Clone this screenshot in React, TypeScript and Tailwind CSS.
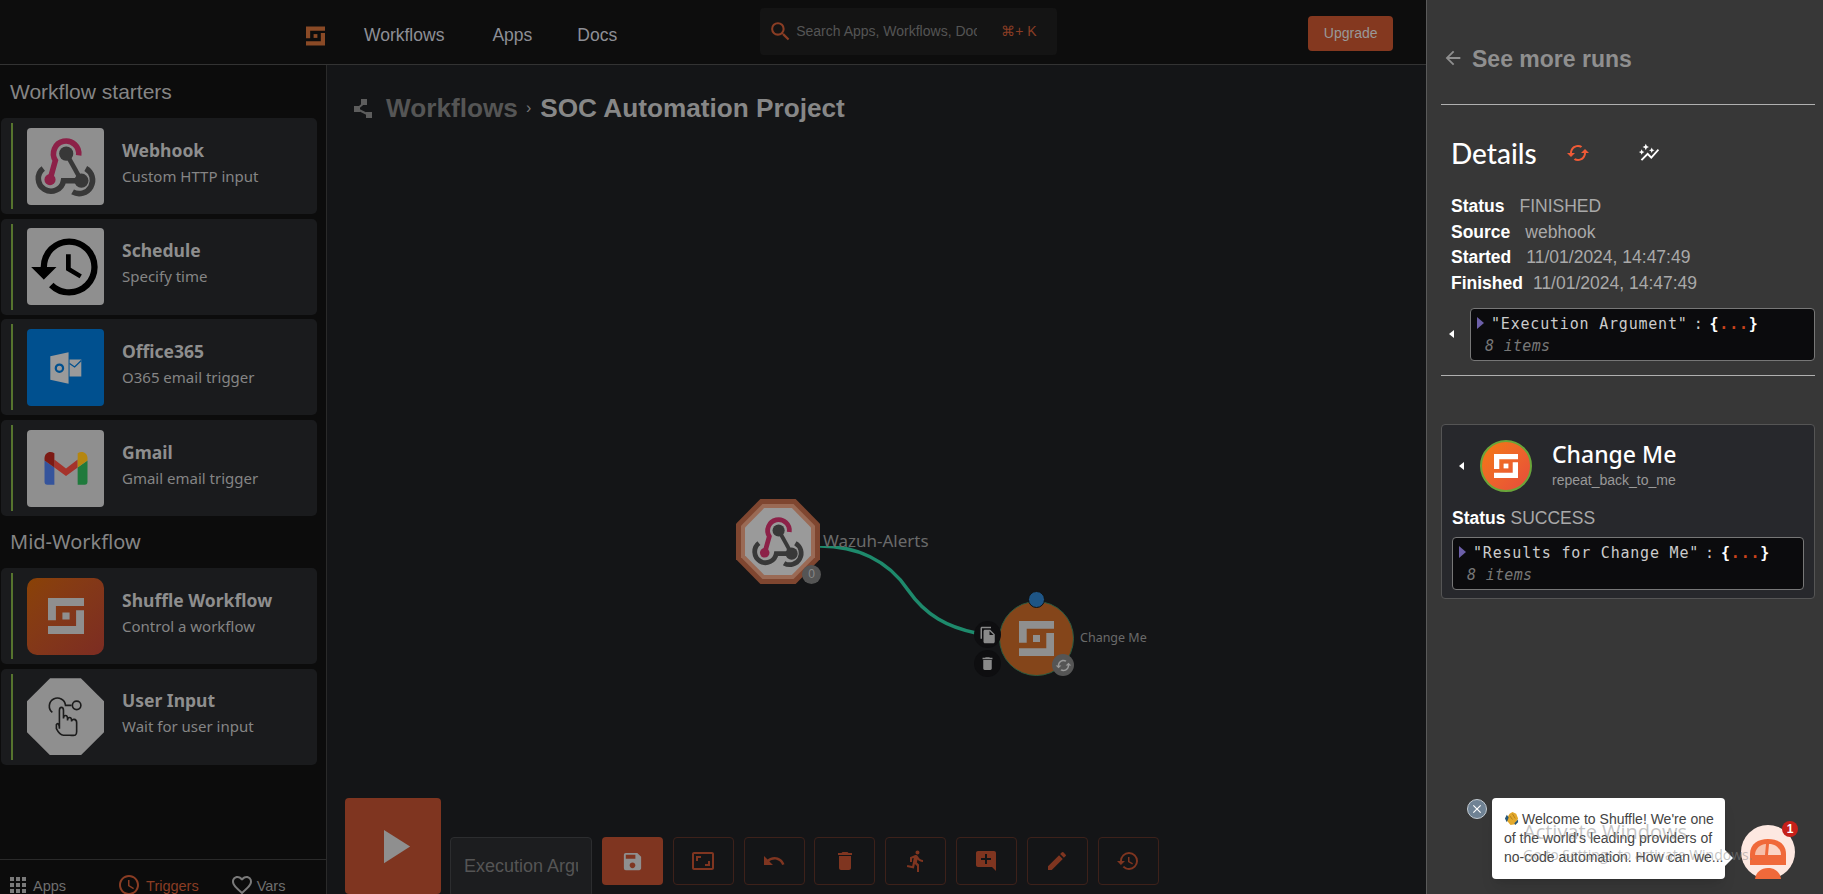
import type { ReactNode } from 'react';
import {
  MdAddComment,
  MdApps,
  MdArrowBack,
  MdAspectRatio,
  MdAutoGraph,
  MdCached,
  MdDelete,
  MdDirectionsRun,
  MdEdit,
  MdFavoriteBorder,
  MdFileCopy,
  MdHistory,
  MdOutlineClose,
  MdOutlineSchedule,
  MdPlayArrow,
  MdRestore,
  MdSave,
  MdSearch,
  MdUndo,
} from 'react-icons/md';

function ShuffleLogo({ className, fill }: { className: string; fill: string }) {
  return (
    <svg viewBox="0 0 100 100" className={className} fill={fill}>
      <path d="M0 0H100V22H22V62H0Z" />
      <path d="M78 34H100V100H0V78H78Z" />
      <path d="M40 40H60V60H40Z" />
    </svg>
  );
}

function WebhookIcon({ className }: { className: string }) {
  return (
    <svg viewBox="0 0 76 76" className={className} fill="none" strokeLinecap="butt">
      <path d="M51 27A12.5 12.5 0 1 0 28 32L22.7 51" stroke="#8c2148" strokeWidth="5.5" />
      <circle cx="22.7" cy="51" r="5.5" fill="#8c2148" />
      <path d="M38.7 25 53.7 52" stroke="#383838" strokeWidth="4.5" />
      <path d="M16 40A12.5 12.5 0 1 0 36 52H53.7" stroke="#383838" strokeWidth="5.5" />
      <path d="M58 40A12.5 12.5 0 1 1 45 63" stroke="#383838" strokeWidth="5.5" />
      <circle cx="38.7" cy="25.3" r="7" fill="#383838" />
      <circle cx="53.7" cy="52" r="7" fill="#383838" />
    </svg>
  );
}

function OutlookIcon() {
  return (
    <svg viewBox="0 0 76 76" className="w-full h-full">
      <path d="M23 27 41 23V54L23 50Z" fill="#9a9a9a" />
      <circle cx="32" cy="38.7" r="3.6" fill="none" stroke="#00508f" strokeWidth="2.2" />
      <path d="M42 30H53.6V47H42Z" fill="#9a9a9a" />
      <path d="M42 34 47 37.5 53.6 31" fill="none" stroke="#00508f" strokeWidth="1.3" />
    </svg>
  );
}

function GmailIcon() {
  return (
    <svg viewBox="0 0 76 76" className="w-full h-full">
      <path d="M17.3 30 27 37V54H20Q17.3 54 17.3 51Z" fill="#35549c" />
      <path d="M59.7 30 50 37V54H57Q59.7 54 59.7 51Z" fill="#1f7a3c" />
      <path d="M27 29 38.5 38 50 29V37L38.5 45.5 27 37Z" fill="#a5332b" />
      <path d="M17.3 30V28C17.3 22 23 20 27 23V37Z" fill="#7c1a14" />
      <path d="M59.7 30V28C59.7 22 54 20 50 23V37Z" fill="#b5860f" />
    </svg>
  );
}

function UserInputIcon() {
  return (
    <svg viewBox="0 0 76 76" className="w-full h-full" fill="none" stroke="#1c1c1c" strokeWidth="1.6">
      <path d="M25 34A8 8 0 1 1 38 27H44" />
      <circle cx="49" cy="27" r="4.2" />
      <path d="M32 50V32C32 28 36 28 36 32V40C36 36 40 36 40 40V42C40 38 44 38 44 42V43C44 40 49 40 49 44V53C49 58 46 56.5 42 56.5H36C33 56.5 30 52 29 50L29 46C30 44 32 45 32 50Z" fill="#8f8f8f" />
    </svg>
  );
}

function WorkflowsIcon() {
  return (
    <svg viewBox="0 0 22 20" className="w-[22px] h-[20px]" fill="#5d5d5d" stroke="#5d5d5d">
      <path d="M11 5 4 11 16 17" fill="none" strokeWidth="2" />
      <rect x="8" y="1" width="6" height="6" stroke="none" />
      <rect x="1" y="8" width="6" height="6" stroke="none" />
      <rect x="13" y="14" width="6" height="6" stroke="none" />
    </svg>
  );
}

function HandEmoji() {
  return (
    <svg viewBox="0 0 16 16" className="inline-block w-[15px] h-[15px] mr-[3px] align-[-2px]">
      <path d="M2 9 6 3 9 1 13 3 15 8 12 14 7 15Z" fill="#e3a92c" />
      <path d="M6 5 9 9M9 3 12 8" stroke="#9a6b12" strokeWidth="0.7" />
      <path d="M3 4 1 8 3 12 5 7ZM12 15 15 12 15 9 11 13Z" fill="#27587a" />
    </svg>
  );
}

function BotAvatar() {
  return (
    <svg viewBox="0 0 54 54" className="w-full h-full">
      <circle cx="27" cy="27" r="27" fill="#fde8e1" />
      <path d="M9 40V29C9 19 17 14 27 14S45 19 45 29V40Z" fill="#f0693a" />
      <path d="M14 30C14 24 19 19 25 19L24 30Z" fill="#f7bfa9" />
      <path d="M28 19C35 19 40 24 40 30H27Z" fill="#fbd5c6" />
      <path d="M14 54C15 47 20 43 27 43S39 47 40 54Z" fill="#f0693a" />
    </svg>
  );
}

function JsonBox({ label, className }: { label: string; className: string }) {
  return (
    <div className={`h-[53px] bg-[#0b0b0d] border border-[#777] rounded-[4px] pl-[6px] font-['DejaVu_Sans_Mono',monospace] text-[15px] tracking-[0.8px] ${className}`}>
      <div className="flex items-center h-[27px] mt-[2px] text-[#ccc]">
        <span className="w-0 h-0 border-y-[6px] border-y-transparent border-l-[7px] border-l-[#6c5fa8] mr-[7px] mb-[3px]" />
        <span>{label}</span>
        <span className="mx-[6px]">:</span>
        <span className="text-white font-bold">{'{'}</span>
        <span className="text-[#c9431c] font-bold">...</span>
        <span className="text-white font-bold">{'}'}</span>
      </div>
      <div className="pl-[8px] -mt-[1px] text-[#777] italic text-[15px] leading-[18px] tracking-[0.3px]">8 items</div>
    </div>
  );
}

function Caret() {
  return <span className="block shrink-0 w-0 h-0 border-y-[4px] border-y-transparent border-r-[5px] border-r-white" />;
}

type StarterProps = { name: string; desc: string; icon: ReactNode; box: string };

function StarterCard({ name, desc, icon, box }: StarterProps) {
  return (
    <div className="h-[96px] rounded-[5px] bg-[#1a1b1d] flex items-center pl-[10px]">
      <div className="w-[2px] h-[86px] bg-[#56742e]" />
      <div className={`w-[77px] h-[77px] ml-[14px] overflow-hidden ${box}`}>{icon}</div>
      <div className="ml-[18px] mb-[8px] font-['Noto_Sans',sans-serif]">
        <div className="text-[17.5px] leading-[22px] font-bold text-[#8e8e8e]">{name}</div>
        <div className="text-[15px] leading-[20px] mt-[5px] text-[#858585]">{desc}</div>
      </div>
    </div>
  );
}

const tools = [
  { icon: <MdAspectRatio />, key: 'fit' },
  { icon: <MdUndo />, key: 'undo' },
  { icon: <MdDelete />, key: 'delete' },
  { icon: <MdDirectionsRun />, key: 'run' },
  { icon: <MdAddComment />, key: 'comment' },
  { icon: <MdEdit />, key: 'edit' },
  { icon: <MdRestore />, key: 'history' },
];

const runRows = [
  { label: 'Status', value: 'FINISHED', gap: 'ml-[15px]' },
  { label: 'Source', value: 'webhook', gap: 'ml-[15px]' },
  { label: 'Started', value: '11/01/2024, 14:47:49', gap: 'ml-[15px]' },
  { label: 'Finished', value: '11/01/2024, 14:47:49', gap: 'ml-[10px]' },
];

export default function App() {
  return (
    <div className="w-[1823px] h-[894px] overflow-hidden flex relative bg-[#141517] font-['Liberation_Sans',sans-serif]">
      <div className="flex-1 min-w-0 flex flex-col">
        {/* top bar */}
        <header className="h-[65px] shrink-0 bg-[#0d0d0d] border-b border-[#333] flex items-center pl-[306px]">
          <ShuffleLogo className="w-[19px] h-[20px] mt-[7px]" fill="#8a4a26" />
          <nav className="flex items-center ml-[39px] mt-[7px] text-[17.5px] text-[#8d8f96]">
            <span>Workflows</span>
            <span className="ml-[48px]">Apps</span>
            <span className="ml-[45px]">Docs</span>
          </nav>
          <div className="w-[297px] h-[47px] ml-[143px] rounded-[4px] bg-[#141414] flex items-center pl-[8px] self-start mt-[8px]">
            <MdSearch className="text-[25px] text-[#8a3d24]" />
            <span className="ml-[3px] w-[181px] overflow-hidden whitespace-nowrap text-[14px] text-[#555]">Search Apps, Workflows, Docs</span>
            <span className="ml-[24px] text-[14px] text-[#8a3d24]">⌘+ K</span>
          </div>
          <button className="w-[85px] h-[35px] ml-[251px] mt-[2px] rounded-[4px] bg-[#84381f] text-[14px] text-[#999]">Upgrade</button>
        </header>

        <div className="flex-1 min-h-0 flex">
          {/* left sidebar */}
          <aside className="w-[327px] shrink-0 bg-[#0c0c0c] border-r border-[#2a2a2a] flex flex-col">
            <div className="w-[316px] ml-[1px]">
              <h2 className="pl-[9px] h-[53px] pt-[13px] text-[21px] leading-[28px] text-[#858585]">Workflow starters</h2>
              <div className="flex flex-col gap-[4.7px]">
                <StarterCard name="Webhook" desc="Custom HTTP input" box="bg-[#8f8f8f] rounded-[4px]" icon={<WebhookIcon className="w-full h-full" />} />
                <StarterCard
                  name="Schedule"
                  desc="Specify time"
                  box="bg-[#8f8f8f] rounded-[4px] flex items-center justify-center"
                  icon={<MdHistory className="text-[76px] text-black shrink-0" />}
                />
                <StarterCard name="Office365" desc="O365 email trigger" box="bg-[#00508f] rounded-[4px]" icon={<OutlookIcon />} />
                <StarterCard name="Gmail" desc="Gmail email trigger" box="bg-[#8f8f8f] rounded-[4px]" icon={<GmailIcon />} />
              </div>
              <h2 className="pl-[9px] h-[52px] pt-[12px] font-['Noto_Sans',sans-serif] text-[20px] leading-[28px] text-[#858585]">Mid-Workflow</h2>
              <div className="flex flex-col gap-[4.7px]">
                <StarterCard
                  name="Shuffle Workflow"
                  desc="Control a workflow"
                  box="rounded-[10px] bg-gradient-to-br from-[#8a4205] to-[#7c2c22] flex items-center justify-center"
                  icon={<ShuffleLogo className="w-[36px] h-[36px]" fill="#8f8f8f" />}
                />
                <StarterCard
                  name="User Input"
                  desc="Wait for user input"
                  box="bg-[#8f8f8f] [clip-path:polygon(30%_0,70%_0,100%_30%,100%_70%,70%_100%,30%_100%,0_70%,0_30%)]"
                  icon={<UserInputIcon />}
                />
              </div>
            </div>
            <div className="mt-auto h-[35px] shrink-0 border-t border-[#2a2a2a] flex items-start pl-[9px] pt-[14px] text-[14.5px] leading-[24px] text-[#6f6f6f]">
              <MdApps className="text-[24px] -ml-[3px] -mt-[1px] text-[#7a7a7a]" />
              <span className="ml-[3px]">Apps</span>
              <MdOutlineSchedule className="text-[24px] ml-[51px] -mt-[1px] text-[#8a3d24]" />
              <span className="ml-[5px] text-[#8a3d24]">Triggers</span>
              <MdFavoriteBorder className="text-[24px] ml-[31px] -mt-[1px] text-[#7a7a7a]" />
              <span className="ml-[3px]">Vars</span>
            </div>
          </aside>

          {/* workflow canvas */}
          <main className="flex-1 min-w-0 relative">
            <div className="flex items-center pl-[26px] pt-[26px]">
              <WorkflowsIcon />
              <span className="ml-[11px] text-[26.2px] leading-[34px] font-bold text-[#555]">Workflows</span>
              <span className="ml-[8px] text-[16px] text-[#777]">›</span>
              <span className="ml-[9px] text-[26.2px] leading-[34px] font-bold text-[#878787]">SOC Automation Project</span>
            </div>

            <svg className="absolute left-[493px] top-[481px] w-[160px] h-[92px]" viewBox="0 0 160 92" fill="none">
              <path d="M0 0C36 0 68 14 88 44C106 70 128 81 156 87" stroke="#1e8a6c" strokeWidth="3.5" />
            </svg>

            {/* trigger node */}
            <div className="absolute left-[409px] top-[434px] w-[84px] h-[85px] bg-[#7f4630] [clip-path:polygon(29%_0,71%_0,100%_29%,100%_71%,71%_100%,29%_100%,0_71%,0_29%)] flex items-center justify-center">
              <div className="w-[74px] h-[75px] bg-[#9a6a55] [clip-path:polygon(29%_0,71%_0,100%_29%,100%_71%,71%_100%,29%_100%,0_71%,0_29%)] flex items-center justify-center">
                <div className="w-[66px] h-[67px] bg-[#9a9a9a] [clip-path:polygon(29%_0,71%_0,100%_29%,100%_71%,71%_100%,29%_100%,0_71%,0_29%)]">
                  <WebhookIcon className="w-full h-full" />
                </div>
              </div>
            </div>
            <div className="absolute left-[475px] top-[500px] w-[19px] h-[19px] rounded-full bg-[#555] text-[#888] text-[12px] leading-[19px] text-center">0</div>
            <div className="absolute left-[496px] top-[463px] font-['Noto_Sans',sans-serif] text-[17px] leading-[26px] text-[#6a6a6a] whitespace-nowrap">Wazuh-Alerts</div>

            {/* action node */}
            <div className="absolute left-[672px] top-[536px] w-[75px] h-[75px] rounded-full border border-[#2b5a40] bg-[#84451a] flex items-center justify-center">
              <ShuffleLogo className="w-[35px] h-[35px]" fill="#8f8f8f" />
            </div>
            <div className="absolute left-[701px] top-[526px] w-[17px] h-[17px] rounded-full bg-[#1e5586] border border-[#111]" />
            <div className="absolute left-[647px] top-[556px] w-[27px] h-[27px] rounded-full bg-[#0e0e10] flex items-center justify-center text-[18px] text-[#8a8a8a]"><MdFileCopy /></div>
            <div className="absolute left-[647px] top-[585px] w-[27px] h-[27px] rounded-full bg-[#0e0e10] flex items-center justify-center text-[17px] text-[#8a8a8a]"><MdDelete /></div>
            <div className="absolute left-[725px] top-[589px] w-[22px] h-[22px] rounded-full bg-[#555] flex items-center justify-center text-[17px] text-[#999]"><MdCached /></div>
            <div className="absolute left-[753px] top-[563px] font-['Noto_Sans',sans-serif] text-[12.5px] leading-[20px] text-[#6a6a6a] whitespace-nowrap">Change Me</div>

            {/* bottom toolbar */}
            <div className="absolute left-[18px] top-[733px] flex items-start">
              <button className="w-[96px] h-[96px] rounded-[4px] bg-[#7f3520] flex items-center justify-center text-[57px] text-[#8f8f8f]"><MdPlayArrow /></button>
              <div className="w-[142px] h-[60px] ml-[9px] mt-[39px] pl-[13px] pr-[13px] rounded-[4px] bg-[#1c1d1f] border border-[#2c2d2f]">
                <div className="text-[18px] leading-[56px] text-[#555] overflow-hidden whitespace-nowrap">Execution Argument</div>
              </div>
              <button className="w-[61px] h-[48px] ml-[10px] mt-[39px] rounded-[4px] bg-[#7f3520] flex items-center justify-center text-[23px] text-[#8f8f8f]"><MdSave /></button>
              {tools.map((t) => (
                <button key={t.key} className="w-[61px] h-[48px] ml-[9.8px] mt-[39px] rounded-[4px] border border-[#3d211a] flex items-center justify-center text-[24px] text-[#7f3520]">{t.icon}</button>
              ))}
            </div>
          </main>
        </div>
      </div>

      {/* execution drawer */}
      <aside className="w-[397px] shrink-0 bg-[#373737] border-l border-[#5a5a5a] pl-[14px] pr-[8px] relative">
        <div className="h-[105px] border-b border-[#b0b0b0] flex items-start pt-[44px]">
          <MdArrowBack className="text-[22px] ml-[1px] mt-[3px] text-[#8f8f8f]" />
          <span className="ml-[8px] text-[23px] leading-[30px] font-bold text-[#8f8f8f]">See more runs</span>
        </div>
        <div className="flex items-center h-[60px] mt-[18px] pl-[10px]">
          <span className="font-['Lato',sans-serif] text-[28px] font-medium text-white">Details</span>
          <MdCached className="text-[24px] ml-[29px] text-[#ef5a36]" />
          <MdAutoGraph className="text-[22px] ml-[48px] text-white" />
        </div>
        <div className="pl-[10px] mt-[11px] text-[17.5px] leading-[25.7px]">
          {runRows.map((r) => (
            <div key={r.label}>
              <span className="font-bold text-white">{r.label}</span>
              <span className={`text-[#a9a9a9] ${r.gap}`}>{r.value}</span>
            </div>
          ))}
        </div>
        <div className="flex items-center h-[53px] mt-[11px] pl-[8px]">
          <Caret />
          <JsonBox label={'"Execution Argument"'} className="flex-1 ml-[16px]" />
        </div>
        <div className="h-[15px] border-b border-[#b0b0b0]" />

        <div className="h-[175px] mt-[48px] rounded-[4px] bg-[#27282c] border border-[#555] px-[10px] relative">
          <div className="flex items-center pt-[15px]">
            <span className="ml-[7px]"><Caret /></span>
            <div className="w-[52px] h-[52px] ml-[16px] rounded-full border-2 border-[#6aa53a] bg-gradient-to-br from-[#f47a06] to-[#e64b3a] flex items-center justify-center">
              <ShuffleLogo className="w-[24px] h-[24px]" fill="#ffffff" />
            </div>
            <div className="ml-[20px] -mt-[3px]">
              <div className="font-['Noto_Sans',sans-serif] text-[23px] leading-[30px] font-medium text-white">Change Me</div>
              <div className="text-[14px] leading-[18px] mt-[2px] text-[#999]">repeat_back_to_me</div>
            </div>
          </div>
          <div className="mt-[14px] text-[17.5px] leading-[24px]">
            <span className="font-bold text-white">Status</span>
            <span className="ml-[5px] text-[#a9a9a9]">SUCCESS</span>
          </div>
          <JsonBox label={'"Results for Change Me"'} className="mt-[7px]" />
        </div>

        {/* chat widget */}
        <div className="absolute left-[40px] top-[799px] w-[20px] h-[20px] rounded-full bg-[#6f8294] border border-[#c3cbd2] flex items-center justify-center text-[14px] text-white"><MdOutlineClose /></div>
        <div className="absolute left-[65px] top-[798px] w-[233px] h-[81px] rounded-[4px] bg-white pl-[12px] pt-[12px] text-[14px] leading-[19px] text-[#444] shadow-lg whitespace-nowrap">
          <HandEmoji />Welcome to Shuffle! We're one<br />
          of the world's leading providers of<br />
          no-code automation. How can we...
          <span className="absolute -right-[8px] top-[52px] w-0 h-0 border-y-[8px] border-y-transparent border-l-[8px] border-l-white" />
        </div>
        <div className="absolute left-[314px] top-[825px] w-[54px] h-[54px]"><BotAvatar /></div>
        <div className="absolute left-[355px] top-[821px] w-[16px] h-[16px] rounded-full bg-[#c6201a] text-white text-[12px] font-bold leading-[16px] text-center">1</div>
        <div className="absolute left-[96px] top-[818px] pointer-events-none font-['Open_Sans',sans-serif] text-[#8a8a8a]/50 whitespace-nowrap">
          <div className="text-[20px] leading-[27px]">Activate Windows</div>
          <div className="text-[14px] leading-[18px] mt-[1px]">Go to Settings to activate Windows.</div>
        </div>
      </aside>
    </div>
  );
}
